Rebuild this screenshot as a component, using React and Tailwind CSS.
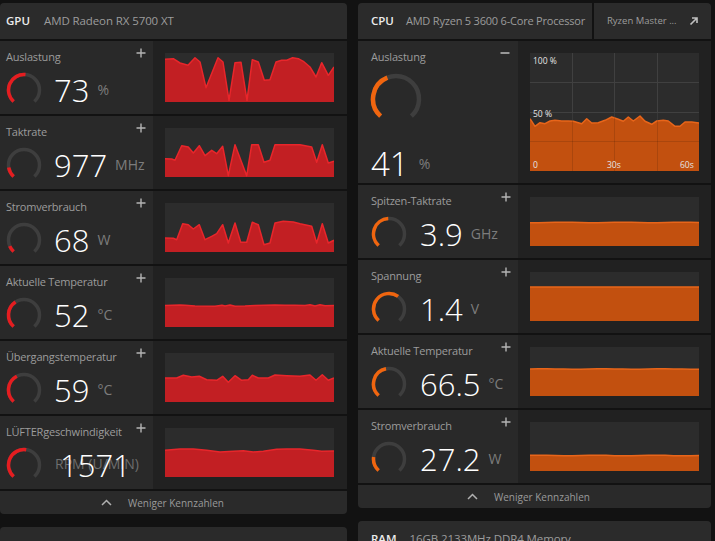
import React from 'react';

const RED_FILL = '#c21f23';
const RED_LINE = '#e8262b';
const RED_G = '#e51d20';
const OR_FILL = '#c2500f';
const OR_LINE = '#e8651a';
const OR_G = '#f0650f';

function Gauge({ size, r, sw, frac, color }) {
  const c = size / 2;
  const a0 = -138;
  const a1 = 138;
  const p = (a) => [c + r * Math.sin((a * Math.PI) / 180), c - r * Math.cos((a * Math.PI) / 180)];
  const arc = (s, e) => {
    const [x0, y0] = p(s);
    const [x1, y1] = p(e);
    return `M${x0} ${y0} A${r} ${r} 0 ${e - s > 180 ? 1 : 0} 1 ${x1} ${y1}`;
  };
  return (
    <svg width={size} height={size} className="shrink-0 block">
      <path d={arc(a0, a1)} stroke="#3e3e3e" strokeWidth={sw} fill="none" />
      <path d={arc(a0, a0 + frac * (a1 - a0))} stroke={color} strokeWidth={sw} fill="none" />
    </svg>
  );
}

function Chart({ pts, w = 169, h = 49, fill, line, under, over }) {
  const poly = pts.map((q) => `${q[0]},${q[1]}`).join(' ');
  return (
    <svg width={w} height={h} className="block">
      <rect width={w} height={h} fill="#2c2c2c" />
      {under}
      <polygon points={`0,${h} ${poly} ${w},${h}`} fill={fill} />
      <polyline points={poly} fill="none" stroke={line} strokeWidth="1.5" strokeLinejoin="round" />
      {over}
    </svg>
  );
}

const fix = (arr) => {
  const a = arr.map((q) => [q[0], q[1]]);
  a[0][0] = 0;
  a[a.length - 1][0] = 169;
  return a;
};

const flat = (y, amp, seed) =>
  Array.from({ length: 21 }, (_, i) => [
    (i * 169) / 20,
    y + amp * Math.sin(i * 0.9 + seed),
  ]);

const GPU_ROWS = [
  {
    title: 'Auslastung',
    value: '73',
    unit: '%',
    frac: 0.52,
    pts: fix([[0,6.3],[8.3,5.7],[15,10],[23,12.3],[30,4.7],[35,9],[41,34.7],[53,4.7],[58,9],[64,47.3],[70,9.7],[76,9.3],[82,47.3],[87.3,6.7],[93.3,9],[99.3,27.3],[105,26.7],[111,9],[116.7,7.3],[121.7,7.3],[127.7,4.7],[133.3,5.7],[138.3,8.3],[145,14],[151,24],[156.7,9.7],[163.3,22.3],[168.3,14]]),
  },
  {
    title: 'Taktrate',
    value: '977',
    unit: 'MHz',
    frac: 0.14,
    pts: fix([[0,30.7],[6.7,31],[10,32.3],[16.7,17.7],[23.3,19],[28.3,25],[34.3,17.7],[40,27.7],[46.7,22.3],[51.7,25.7],[57.7,18.3],[63.3,47.7],[70,16.7],[81.7,47.7],[86.7,16.7],[93.3,16.7],[99,34.3],[105,32.3],[110,16.7],[135,16.7],[146.7,19],[151.7,34.3],[157.3,16.7],[163.3,35],[168.3,33.3]]),
  },
  {
    title: 'Stromverbrauch',
    value: '68',
    unit: 'W',
    frac: 0.09,
    pts: fix([[0,35],[8.3,35.3],[11.7,36.7],[17.7,20.7],[23.3,21.7],[28.3,26],[34.3,21.7],[40,36.7],[46.7,33.3],[51.7,30.7],[57.7,21.7],[63.3,40],[70,20],[75.7,39.3],[81.7,39.3],[87.3,19.3],[93.3,21.7],[99,41.7],[105,40],[110,20],[118.3,18.3],[128.3,19],[135,20.7],[146.7,23.3],[151.7,40],[157.3,20.7],[163.3,40],[168.3,37.3]]),
  },
  {
    title: 'Aktuelle Temperatur',
    value: '52',
    unit: '°C',
    frac: 0.38,
    pts: fix([[0,27.5],[15,27],[20,27.3],[30,28],[50,28.2],[57,27.2],[60,28],[65,27],[70,28.2],[80,28],[90,27.5],[100,27.2],[110,27],[120,27.2],[130,27.3],[140,27.5],[145,26.8],[150,28],[155,26.8],[160,27.8],[169,27.5]]),
  },
  {
    title: 'Übergangstemperatur',
    value: '59',
    unit: '°C',
    frac: 0.4,
    pts: fix([[0,25],[11.7,25],[18.3,22.3],[26.7,24],[34.3,23.3],[41.7,26.7],[51.7,27.3],[57.7,23.3],[63.3,29.3],[70,22.7],[76.7,27.3],[83.3,26.7],[87.3,22.3],[93.3,25],[103.3,25],[110,22],[121.7,22.7],[135,23.3],[145,22],[151,27.3],[157.3,21.7],[163.3,27.3],[168.3,25]]),
  },
];

const FAN_PTS = fix([[0,22.3],[15,21],[28.3,21],[41.7,22.3],[55,24],[68.3,23.3],[78.3,22.7],[88.3,24],[98.3,23.3],[111.7,21.3],[121.7,21],[135,21],[148.3,22.3],[156.7,23.3],[168.3,23]]);

const CPU_BIG_PTS = fix([[0,65.7],[5,73.3],[10,69.7],[15,70.7],[20,68],[25,67.3],[31.7,68],[38.3,68],[43.3,68.3],[51.7,70.7],[56.7,65.7],[61.7,70],[68.3,69.7],[75,67.3],[81.7,64],[88.3,66.3],[93.3,68.3],[98.3,64],[103.3,68],[110,63],[115,68.3],[121.7,71.3],[126.7,68],[133.3,67.3],[138.3,68],[145,73.3],[150,73.3],[155,69],[161.7,69],[169,70]]);

const CPU_ROWS = [
  { title: 'Spitzen-Taktrate', value: '3.9', unit: 'GHz', frac: 0.49, pts: flat(25.5, 0.3, 1) },
  { title: 'Spannung', value: '1.4', unit: 'V', frac: 0.63, pts: flat(15, 0.1, 2) },
  { title: 'Aktuelle Temperatur', value: '66.5', unit: '°C', frac: 0.46, pts: flat(22, 0.2, 3) },
  { title: 'Stromverbrauch', value: '27.2', unit: 'W', frac: 0.2, pts: flat(33.5, 0.3, 4) },
];

function Plus() {
  return (
    <svg width="10" height="10" viewBox="0 0 10 10" className="block">
      <path d="M5 0.5V9.5M0.5 5H9.5" stroke="#b4b4b4" strokeWidth="1.4" />
    </svg>
  );
}

function Minus() {
  return (
    <svg width="10" height="10" viewBox="0 0 10 10" className="block">
      <path d="M0.5 5H9.5" stroke="#b4b4b4" strokeWidth="1.6" />
    </svg>
  );
}

function Chevron() {
  return (
    <svg width="11" height="7" viewBox="0 0 11 7" className="block">
      <path d="M1 6L5.5 1.5L10 6" stroke="#b0b0b0" strokeWidth="1.5" fill="none" />
    </svg>
  );
}

function Title({ children }) {
  return <div className="text-[11px] leading-[14px] text-[#9c9c9c] tracking-[-0.2px] whitespace-nowrap">{children}</div>;
}

function GpuRow({ row }) {
  return (
    <div className="flex h-[73px] shrink-0 bg-[#292929]">
      <div className="relative w-[153px] shrink-0 pl-[6px] pt-[9px]">
        <Title>{row.title}</Title>
        <div className="absolute left-[136px] top-[7px]">
          <Plus />
        </div>
        <div className="mt-[8px] flex h-[36px] items-center">
          <Gauge size={36} r={15.5} sw={3.5} frac={row.frac} color={RED_G} />
          <div className="ml-[12px] text-[31px] font-light leading-none text-white">{row.value}</div>
          <div className="ml-[8px] text-[14px] leading-none text-[#7c7c7c]">{row.unit}</div>
        </div>
      </div>
      <div className="flex-1 bg-[#212121] pl-[12px] pt-[12px]">
        <Chart pts={row.pts} fill={RED_FILL} line={RED_LINE} />
      </div>
    </div>
  );
}

function FanRow() {
  return (
    <div className="flex h-[73px] shrink-0 bg-[#292929]">
      <div className="relative w-[153px] shrink-0 pl-[6px] pt-[9px]">
        <Title>LÜFTERgeschwindigkeit</Title>
        <div className="absolute left-[136px] top-[7px]">
          <Plus />
        </div>
        <div className="relative mt-[8px] flex h-[36px] items-center">
          <Gauge size={36} r={15.5} sw={3.5} frac={0.53} color={RED_G} />
          <div className="absolute left-[49px] top-[10px] text-[14px] leading-none text-[#6e6e6e] whitespace-nowrap">RPM (U/MIN)</div>
          <div className="relative ml-[18px] text-[31px] font-light leading-none text-white">1571</div>
        </div>
      </div>
      <div className="flex-1 bg-[#212121] pl-[12px] pt-[12px]">
        <Chart pts={FAN_PTS} fill={RED_FILL} line={RED_LINE} />
      </div>
    </div>
  );
}

function CpuRow({ row }) {
  return (
    <div className="flex h-[73px] shrink-0 bg-[#292929]">
      <div className="relative w-[160px] shrink-0 pl-[13px] pt-[9px]">
        <Title>{row.title}</Title>
        <div className="absolute left-[143px] top-[7px]">
          <Plus />
        </div>
        <div className="mt-[8px] flex h-[36px] items-center">
          <Gauge size={36} r={15.5} sw={3.5} frac={row.frac} color={OR_G} />
          <div className="ml-[13px] text-[31px] font-light leading-none text-white">{row.value}</div>
          <div className="ml-[8px] text-[14px] leading-none text-[#7c7c7c]">{row.unit}</div>
        </div>
      </div>
      <div className="flex-1 bg-[#212121] pl-[12px] pt-[12px]">
        <Chart pts={row.pts} fill={OR_FILL} line={OR_LINE} />
      </div>
    </div>
  );
}

function CpuBigRow() {
  const grid = (
    <g stroke="#404040" strokeWidth="1">
      <line x1="42.5" y1="0" x2="42.5" y2="118" />
      <line x1="84.5" y1="0" x2="84.5" y2="118" />
      <line x1="127.5" y1="0" x2="127.5" y2="118" />
      <line x1="0" y1="29.5" x2="169" y2="29.5" />
      <line x1="0" y1="59.5" x2="169" y2="59.5" />
      <line x1="0" y1="88.5" x2="169" y2="88.5" />
    </g>
  );
  const over = (
    <g>
      <g stroke="#000" strokeOpacity="0.12" strokeWidth="1">
        <line x1="42.5" y1="60" x2="42.5" y2="118" />
        <line x1="84.5" y1="60" x2="84.5" y2="118" />
        <line x1="127.5" y1="60" x2="127.5" y2="118" />
        <line x1="0" y1="88.5" x2="169" y2="88.5" />
      </g>
      <g fill="#e4e4e4" fontSize="8.5" fontFamily="'Open Sans', sans-serif">
        <text x="3" y="10.5">100 %</text>
        <text x="3" y="64">50 %</text>
        <text x="3" y="115">0</text>
        <text x="77" y="115">30s</text>
        <text x="150" y="115">60s</text>
      </g>
    </g>
  );
  return (
    <div className="flex h-[142px] shrink-0 bg-[#292929]">
      <div className="relative flex w-[160px] shrink-0 flex-col pl-[13px] pt-[9px]">
        <Title>Auslastung</Title>
        <div className="absolute left-[142px] top-[7px]">
          <Minus />
        </div>
        <div className="mt-[9px] -ml-[1px]">
          <Gauge size={52} r={23} sw={4.5} frac={0.42} color={OR_G} />
        </div>
        <div className="mt-auto mb-[3px] flex items-center">
          <div className="text-[33px] font-light leading-none text-white">41</div>
          <div className="ml-[10px] text-[14px] leading-none text-[#7c7c7c]">%</div>
        </div>
      </div>
      <div className="flex-1 bg-[#212121] pl-[12px] pt-[12px]">
        <Chart pts={CPU_BIG_PTS} h={118} fill={OR_FILL} line={OR_LINE} under={grid} over={over} />
      </div>
    </div>
  );
}

function Less({ pl }) {
  return (
    <div className={`flex h-[23px] shrink-0 items-center gap-[16px] rounded-b-[4px] bg-[#2a2a2a] ${pl}`}>
      <Chevron />
      <span className="text-[10px] leading-none text-[#9a9a9a]">Weniger Kennzahlen</span>
    </div>
  );
}

export default function App() {
  return (
    <div className="flex h-[541px] w-[715px] overflow-hidden bg-[#121212] font-['Open_Sans','Noto_Sans',sans-serif]">
      <div className="flex w-[347px] shrink-0 flex-col pt-[3px]">
        <div className="flex h-[36px] shrink-0 items-center gap-[14px] rounded-t-[4px] bg-[#2b2b2b] pl-[6px]">
          <span className="text-[11.5px] font-semibold text-[#ececec]">GPU</span>
          <span className="text-[11.5px] text-[#9c9c9c] tracking-[-0.1px] whitespace-nowrap">AMD Radeon RX 5700 XT</span>
        </div>
        <div className="mt-[2px] flex shrink-0 flex-col gap-[2px]">
          {GPU_ROWS.map((r) => (
            <GpuRow key={r.title} row={r} />
          ))}
          <FanRow />
          <Less pl="pl-[101px]" />
        </div>
        <div className="mt-[13px] h-[40px] shrink-0 rounded-t-[4px] bg-[#2a2a2a]" />
      </div>

      <div className="ml-[11px] flex w-[353px] shrink-0 flex-col pt-[3px]">
        <div className="flex h-[36px] shrink-0">
          <div className="flex min-w-0 flex-1 items-center gap-[12px] overflow-hidden rounded-tl-[4px] bg-[#2b2b2b] pl-[13px]">
            <span className="text-[11.5px] font-semibold text-[#ececec]">CPU</span>
            <span className="text-[11px] text-[#9c9c9c] tracking-[-0.2px] whitespace-nowrap">AMD Ryzen 5 3600 6-Core Processor</span>
          </div>
          <div className="ml-[2px] flex w-[117px] shrink-0 items-center justify-between rounded-tr-[4px] bg-[#2b2b2b] pl-[13px] pr-[12px]">
            <span className="text-[9.5px] text-[#9c9c9c] whitespace-nowrap">Ryzen Master ...</span>
            <svg width="10" height="10" viewBox="0 0 10 10" className="block">
              <path d="M1.5 8.5L8 2M3 2H8V7" stroke="#c0c0c0" strokeWidth="1.6" fill="none" />
            </svg>
          </div>
        </div>
        <div className="mt-[2px] flex shrink-0 flex-col gap-[2px]">
          <CpuBigRow />
          {CPU_ROWS.map((r) => (
            <CpuRow key={r.title} row={r} />
          ))}
          <Less pl="pl-[109px]" />
        </div>
        <div className="mt-[13px] flex h-[36px] shrink-0 items-center gap-[13px] rounded-t-[4px] bg-[#2b2b2b] pl-[13px]">
          <span className="text-[11.5px] font-semibold text-[#ececec]">RAM</span>
          <span className="text-[11.5px] text-[#9c9c9c] tracking-[-0.1px] whitespace-nowrap">16GB 2133MHz DDR4 Memory</span>
        </div>
      </div>
    </div>
  );
}
